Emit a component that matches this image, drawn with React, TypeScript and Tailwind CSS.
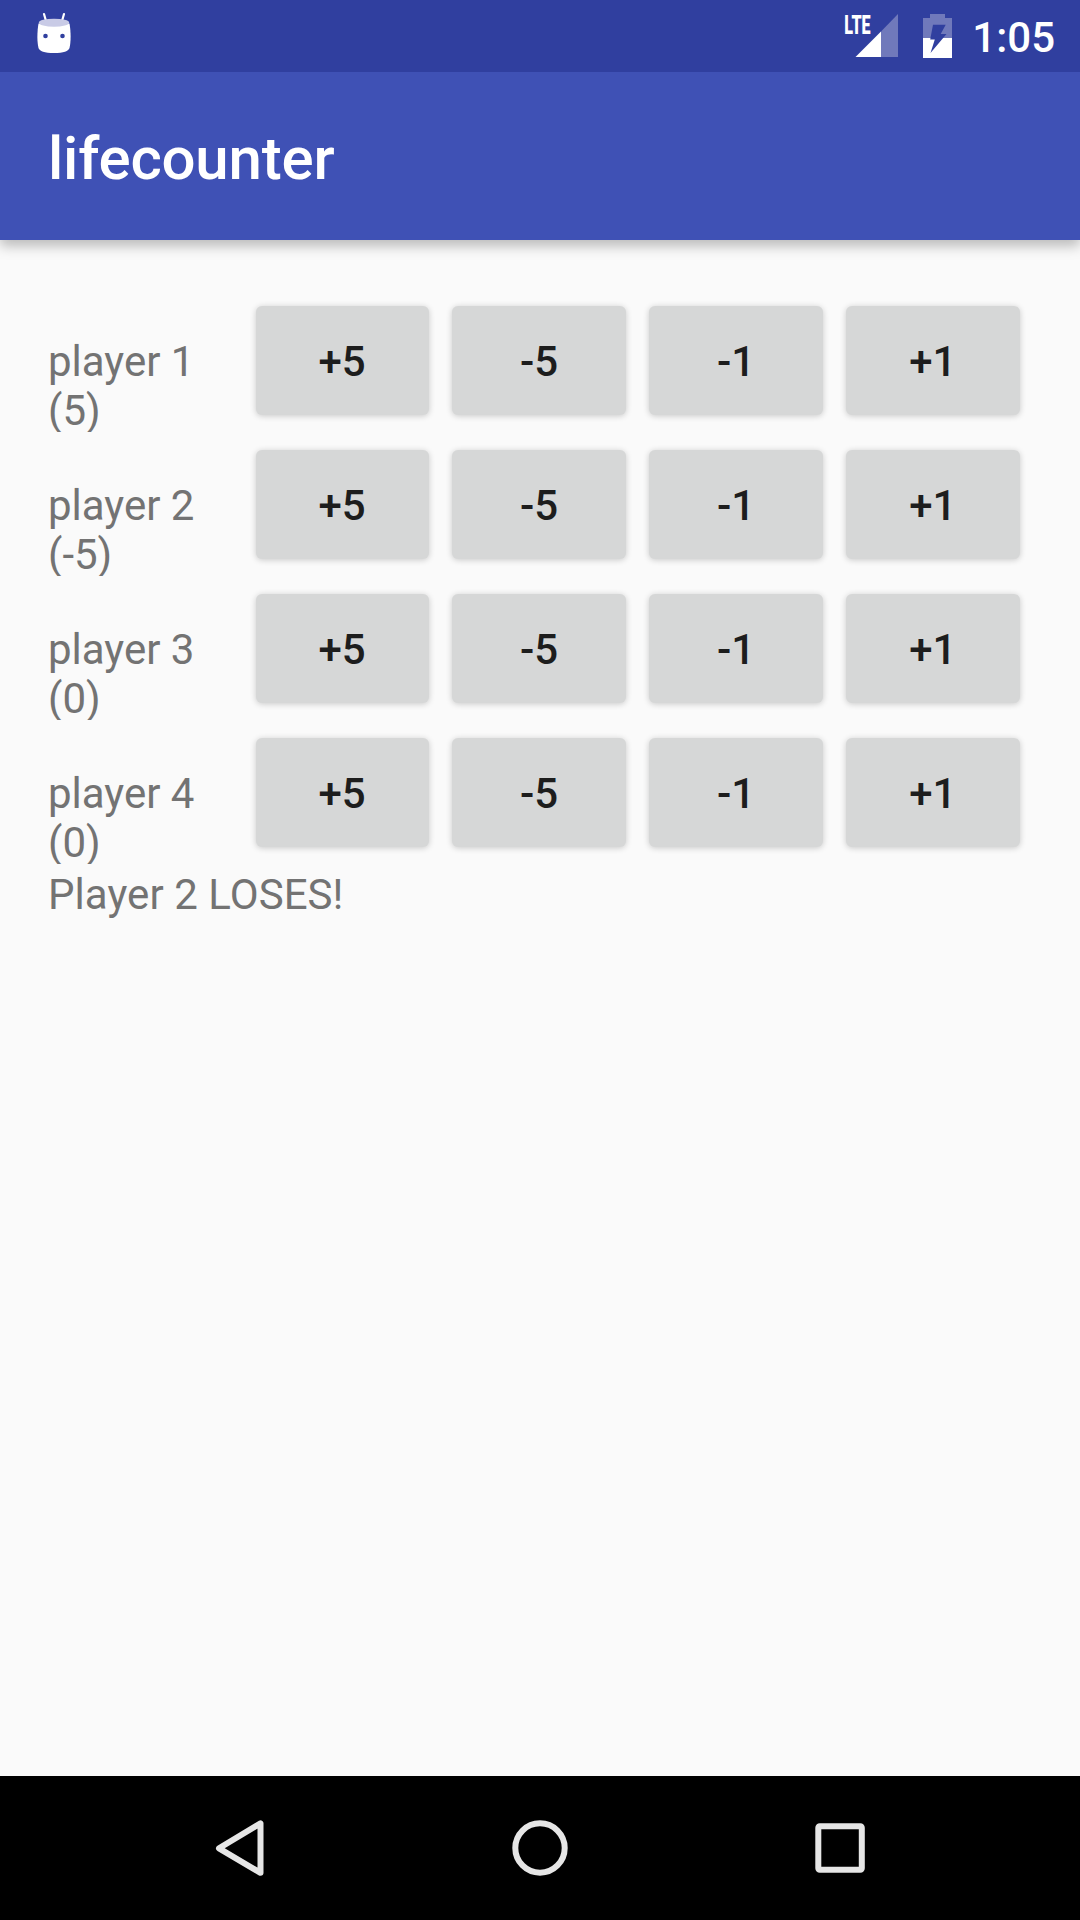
const players = [
  { name: "player 1", life: 5 },
  { name: "player 2", life: -5 },
  { name: "player 3", life: 0 },
  { name: "player 4", life: 0 },
];

const steps = ["+5", "-5", "-1", "+1"];

function StatusBar() {
  return (
    <div className="relative z-10 flex h-[72px] shrink-0 items-start bg-[#303f9f] text-white">
      <svg className="ml-[36px] mt-[10px]" width="36" height="46" viewBox="36 10 36 46">
        <path d="M44 14l2 7M64 14l-2 7" stroke="#fff" strokeWidth="2.2" strokeLinecap="round" />
        <path d="M38.5 23.5C37 32 37 42 38.5 48c.8 3 6 5 15.500 5s14.700-2 15.500-5c1.500-6 1.500-16 0-24.500z" fill="#fff" />
        <ellipse cx="54" cy="22.700" rx="15.200" ry="4" fill="#c9cbe6" />
        <circle cx="45.500" cy="36" r="2.300" fill="#303f9f" />
        <circle cx="62.500" cy="36" r="2.300" fill="#303f9f" />
      </svg>
      <svg className="ml-auto mt-[10px]" width="58" height="50" viewBox="842 10 58 50">
        <text x="0" y="0" transform="translate(844.300 33.500) scale(.62 1)" fontFamily="Roboto" fontWeight="900" fontSize="26" fill="#fff">LTE</text>
        <path d="M898 14v43h-17V31.500z" fill="#7079bb" />
        <path d="M881 31.500V57h-25.500z" fill="#fff" />
      </svg>
      <svg className="ml-[20px] mt-[10px]" width="36" height="50" viewBox="920 10 36 50">
        <path d="M930 14h15v4h7v20h-29V18h7z" fill="#7079bb" />
        <path d="M923 38h29v20h-29z" fill="#fff" />
        <path d="M933 24.700h12.700l-5 9.300h5.800L930.500 53l4.300-13.500h-4.600z" fill="#303f9f" />
      </svg>
      <span className="mr-[25px] mt-[13px] w-[99px] whitespace-nowrap text-right text-[42px] font-medium leading-[49px]">1:05</span>
    </div>
  );
}

export default function App() {
  return (
    <div className="flex h-[1920px] w-[1080px] flex-col overflow-hidden bg-[#fafafa] font-['Roboto',sans-serif]">
      <StatusBar />
      <header className="flex h-[168px] shrink-0 items-center bg-[#3f51b5] pl-[48px] pt-[5px] shadow-[0_6px_12px_rgba(0,0,0,0.26)]">
        <h1 className="text-[60px] font-medium leading-[70px] tracking-[-0.2px] text-white">lifecounter</h1>
      </header>
      <main className="flex grow flex-col px-[48px] pt-[48px] text-[42px] leading-[49px] text-[#737373]">
        {players.map((p) => (
          <div key={p.name} className="flex h-[144px]">
            <div className="h-full w-[207.5px] shrink-0 overflow-hidden pt-[49px]">
              <div>{p.name}</div>
              <div>({p.life})</div>
            </div>
            <div className="mt-[18px] grid h-[108.5px] w-[764px] shrink-0 grid-cols-4 gap-[23.75px]">
              {steps.map((s) => (
                <button
                  key={s}
                  className="rounded-[6px] bg-[#d6d7d7] pt-[1.5px] text-center font-medium text-[#1d1d1d] shadow-[0_1px_6px_rgba(0,0,0,0.2)]"
                >
                  {s}
                </button>
              ))}
            </div>
          </div>
        ))}
        <p className="mt-[6px] tracking-[0.06px]">Player 2 LOSES!</p>
      </main>
      <nav className="flex h-[144px] shrink-0 items-center justify-between bg-black px-[210px]">
        <svg width="60" height="60" viewBox="210 1818 60 60" fill="none" stroke="#e6e6e6" strokeWidth="6" strokeLinejoin="round">
          <path d="M219 1848.300l41.500-25v49.500z" />
        </svg>
        <svg width="60" height="60" viewBox="510 1818 60 60" fill="none" stroke="#e6e6e6" strokeWidth="6">
          <circle cx="540" cy="1848" r="24.700" />
        </svg>
        <svg width="60" height="60" viewBox="810 1818 60 60" fill="none" stroke="#e6e6e6" strokeWidth="6">
          <rect x="818.300" y="1826.300" width="43.500" height="43.500" rx="1.500" />
        </svg>
      </nav>
    </div>
  );
}
